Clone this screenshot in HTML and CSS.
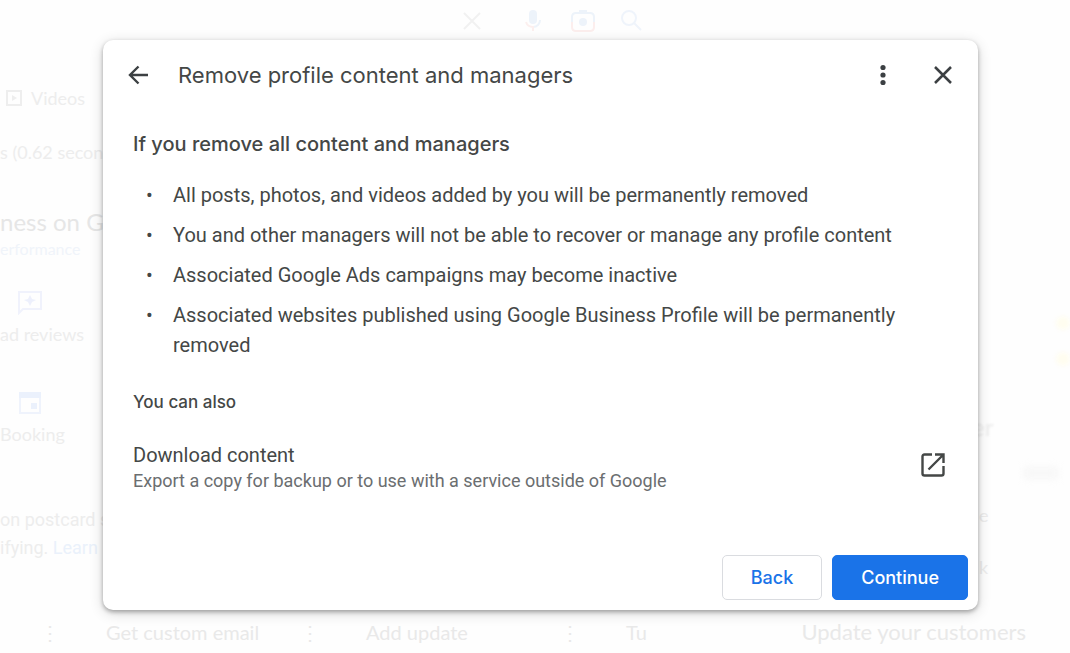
FILE: index.html
```html
<!DOCTYPE html>
<html lang="en">
	<head>
		<meta charset="UTF-8" />
		<meta name="viewport" content="width=device-width, initial-scale=1.0" />
		<title>Remove profile content and managers</title>
		<link rel="stylesheet" href="styles.css">
	</head>
	<body>
		<!-- Search page, faded out behind the dialog -->
		<div class="page" aria-hidden="true">
			<div class="search-bar">
				<svg width="24" height="24" viewBox="0 0 24 24" stroke="#f1f1f1" stroke-width="2">
					<path d="M4 4l16 16M20 4L4 20" />
				</svg>
				<svg class="mic" width="24" height="24" viewBox="0 0 24 24">
					<rect x="8" y="1" width="8" height="14" rx="4" fill="#edf3fa" />
					<path d="M19 11c0 4-3 7-7 7" fill="none" stroke="#edf3fa" stroke-width="2" />
					<path d="M5 13c1 3 4 5 7 5v4" fill="none" stroke="#fcefee" stroke-width="2" />
				</svg>
				<svg width="26" height="24" viewBox="0 0 26 24">
					<path d="M2 13V8q0-4 4-4h14q4 0 4 4v5M9 2h8" fill="none" stroke="#edf3fa" stroke-width="2" />
					<path d="M2 13v5q0 4 4 4h14q4 0 4-4v-5" fill="none" stroke="#fceeed" stroke-width="2" />
					<circle cx="13" cy="13" r="4" fill="#edf3fa" />
				</svg>
				<svg width="22" height="24" viewBox="0 0 22 24" fill="none" stroke="#eff4fb" stroke-width="2">
					<circle cx="8" cy="9" r="7" />
					<path d="M13 14l7 7" />
				</svg>
			</div>
			<div class="columns">
				<div class="results">
					<div class="tab">
						<svg width="16" height="16" viewBox="0 0 16 16">
							<path d="M1 1h14v14H1z" fill="none" stroke="#eeeeee" stroke-width="2" />
							<path d="M6 5l5 3-5 3z" fill="#eeeeee" />
						</svg>
						Videos
					</div>
					<p class="stats">s (0.62 secon</p>
					<p class="business">ness on G</p>
					<p class="performance">erformance</p>
					<div class="action">
						<svg width="26" height="26" viewBox="0 0 26 26">
							<path d="M2 24V3h22v17H6z" fill="none" stroke="#f0f2fc" stroke-width="2" />
							<path d="M13 6l2 4 4 1-4 2-2 4-2-4-4-2 4-1z" fill="#edf0fc" />
						</svg>
						<span>ad reviews</span>
					</div>
					<div class="action">
						<svg width="26" height="26" viewBox="0 0 26 26">
							<path d="M3 5h20v19H3z" fill="none" stroke="#eff3fc" stroke-width="2" />
							<path d="M2 3h22v6H2zM14 14h6v6h-6z" fill="#ebf1fc" />
						</svg>
						<span>Booking</span>
					</div>
					<p class="postcard">on postcard s<br />ifying. <span class="learn">Learn</span></p>
				</div>
				<div class="panel">
					<span class="star"></span>
					<span class="star"></span>
					<span class="panel-title">er</span>
					<span class="smudge"></span>
					<span class="panel-line">e</span>
					<span class="panel-line">k</span>
				</div>
			</div>
			<div class="cards">
				<span class="dots">⋮</span>
				<span class="card">Get custom email</span>
				<span class="dots">⋮</span>
				<span class="card">Add update</span>
				<span class="dots">⋮</span>
				<span class="card">Tu</span>
				<span class="customers">Update your customers</span>
			</div>
		</div>

		<div class="overlay">
			<div class="dialog" role="dialog" aria-labelledby="dialog-title">
				<div class="dialog-header">
					<button class="icon-button" aria-label="Back to previous step">
						<svg width="30" height="30" viewBox="0 0 30 30" fill="none" stroke="currentColor" stroke-width="2.4">
							<path d="M25 15H7M15.500 6.500L7 15l8.500 8.500" />
						</svg>
					</button>
					<h1 id="dialog-title">Remove profile content and managers</h1>
					<button class="icon-button" aria-label="More options">
						<svg width="30" height="30" viewBox="0 0 30 30" fill="currentColor">
							<circle cx="15" cy="7.5" r="2.6" />
							<circle cx="15" cy="15" r="2.6" />
							<circle cx="15" cy="22.5" r="2.6" />
						</svg>
					</button>
					<button class="icon-button close" aria-label="Close">
						<svg width="30" height="30" viewBox="0 0 30 30" stroke="currentColor" stroke-width="2.5">
							<path d="M7 7l16 16M23 7L7 23" />
						</svg>
					</button>
				</div>
				<div class="dialog-body">
					<h2>If you remove all content and managers</h2>
					<ul>
						<li>All posts, photos, and videos added by you will be permanently removed</li>
						<li>You and other managers will not be able to recover or manage any profile content</li>
						<li>Associated Google Ads campaigns may become inactive</li>
						<li>Associated websites published using Google Business Profile will be permanently removed</li>
					</ul>
					<h3>You can also</h3>
					<a class="download" href="#">
						<span class="download-text">
							<span class="download-title">Download content</span>
							<span class="download-note">Export a copy for backup or to use with a service outside of Google</span>
						</span>
						<svg width="30" height="46" viewBox="0 0 30 46" fill="none" stroke="currentColor" stroke-width="2.4">
							<path d="M14 12.500H6.500q-2 0-2 2v17q0 2 2 2h17q2 0 2-2V24" />
							<path d="M17 12.500h8.500V21M25.500 12.500L10.500 27.500" />
						</svg>
					</a>
				</div>
				<div class="dialog-footer">
					<button class="button">Back</button>
					<button class="button primary">Continue</button>
				</div>
			</div>
		</div>
	</body>
</html>
```
FILE: styles.css
```css
* {
	margin: 0;
	padding: 0;
	box-sizing: border-box;
}
body {
	position: relative;
	min-height: 100vh;
	background-color: #fefefe;
	font-family: Roboto, sans-serif;
	color: #444746;
	overflow: hidden;
}
svg {
	display: block;
	flex-shrink: 0;
}

/* Faded page */
.page {
	color: #ededed;
	font-family: Lato, sans-serif;
	font-size: 18px;
}
.search-bar {
	display: flex;
	align-items: center;
	gap: 25px;
	height: 42px;
	padding-left: 460px;
}
.mic {
	margin-left: 12px;
}
.columns {
	display: flex;
	justify-content: space-between;
}
.results {
	padding-top: 41px;
	white-space: nowrap;
}
.tab {
	display: flex;
	align-items: center;
	gap: 9px;
	height: 30px;
	padding-left: 6px;
}
.stats {
	margin-top: 24px;
	line-height: 30px;
}
.business {
	margin-top: 40px;
	font-size: 24px;
	line-height: 30px;
	color: #e6e6e6;
}
.performance {
	font-size: 16px;
	line-height: 24px;
	color: #f0f4fa;
}
.action {
	height: 100px;
	padding-top: 28px;
}
.action svg {
	margin-left: 17px;
}
.action span {
	display: block;
	margin-top: 6px;
	line-height: 26px;
}
.postcard {
	margin-top: 45px;
	font-family: Roboto, sans-serif;
	line-height: 28px;
}
.learn {
	color: #eaf1fb;
}
.panel {
	display: flex;
	flex-direction: column;
	width: 98px;
	padding-top: 274px;
}
.star {
	align-self: flex-end;
	width: 14px;
	height: 14px;
	margin-bottom: 22px;
	border-radius: 7px;
	background-color: #fffdf0;
	filter: blur(2px);
}
.panel-title {
	margin-top: 24px;
	font-size: 24px;
	line-height: 30px;
	filter: blur(1px);
}
.smudge {
	width: 34px;
	height: 10px;
	margin: 26px 0 11px 52px;
	background-color: #f6f6f6;
	filter: blur(4px);
}
.panel-line {
	padding-left: 7px;
	line-height: 52px;
}
.cards {
	display: flex;
	align-items: center;
	margin-top: 24px;
	padding-left: 36px;
	font-size: 20px;
	line-height: 30px;
	color: #e9e9e9;
	white-space: nowrap;
}
.dots {
	width: 28px;
	text-align: center;
}
.card {
	width: 232px;
	padding-left: 42px;
}
.card:nth-child(6) {
	width: auto;
}
.customers {
	margin-left: auto;
	padding-right: 44px;
	font-size: 22px;
}

/* Dialog */
.overlay {
	position: absolute;
	top: 0;
	left: 0;
	right: 0;
	padding: 40px 92px 43px 103px;
}
.dialog {
	border-radius: 10px;
	background-color: white;
	box-shadow: 0 2px 4px rgba(0, 0, 0, 0.3), 0 3px 14px rgba(0, 0, 0, 0.16);
}
.dialog-header {
	display: flex;
	align-items: center;
	height: 70px;
	padding: 0 20px;
}
.icon-button {
	width: 30px;
	height: 30px;
	border: none;
	background: none;
	color: #3c4043;
	cursor: pointer;
}
.close {
	margin-left: 30px;
}
h1 {
	flex: 1;
	padding-left: 25px;
	font-family: Inter, sans-serif;
	font-size: 22px;
	font-weight: 400;
}
.dialog-body {
	padding: 19px 30px 0;
}
h2 {
	font-family: Inter, sans-serif;
	font-size: 20px;
	font-weight: 500;
	line-height: 30px;
}
ul {
	margin-top: 21px;
	list-style: none;
}
li {
	display: flex;
	margin-bottom: 10px;
	font-size: 20px;
	line-height: 30px;
}
li::before {
	content: "•";
	flex: none;
	width: 27px;
	margin-left: 13px;
}
h3 {
	margin-top: 27px;
	font-family: Inter, sans-serif;
	font-size: 17px;
	font-weight: 500;
	line-height: 30px;
}
.download {
	display: flex;
	align-items: flex-start;
	justify-content: space-between;
	margin-top: 25px;
	color: inherit;
	text-decoration: none;
}
.download-title,
.download-note {
	display: block;
	line-height: 26px;
}
.download-title {
	font-size: 20px;
}
.download-note {
	font-size: 18px;
	color: #6b6e70;
}
.dialog-footer {
	display: flex;
	justify-content: flex-end;
	gap: 10px;
	padding: 61px 10px 10px;
}
.button {
	height: 45px;
	padding: 0 28px;
	border: 1px solid #dadce0;
	border-radius: 5px;
	background-color: white;
	color: #1a73e8;
	font-family: Inter, sans-serif;
	font-size: 18px;
	font-weight: 500;
	cursor: pointer;
}
.primary {
	border-color: #1a73e8;
	background-color: #1a73e8;
	color: white;
}
```
